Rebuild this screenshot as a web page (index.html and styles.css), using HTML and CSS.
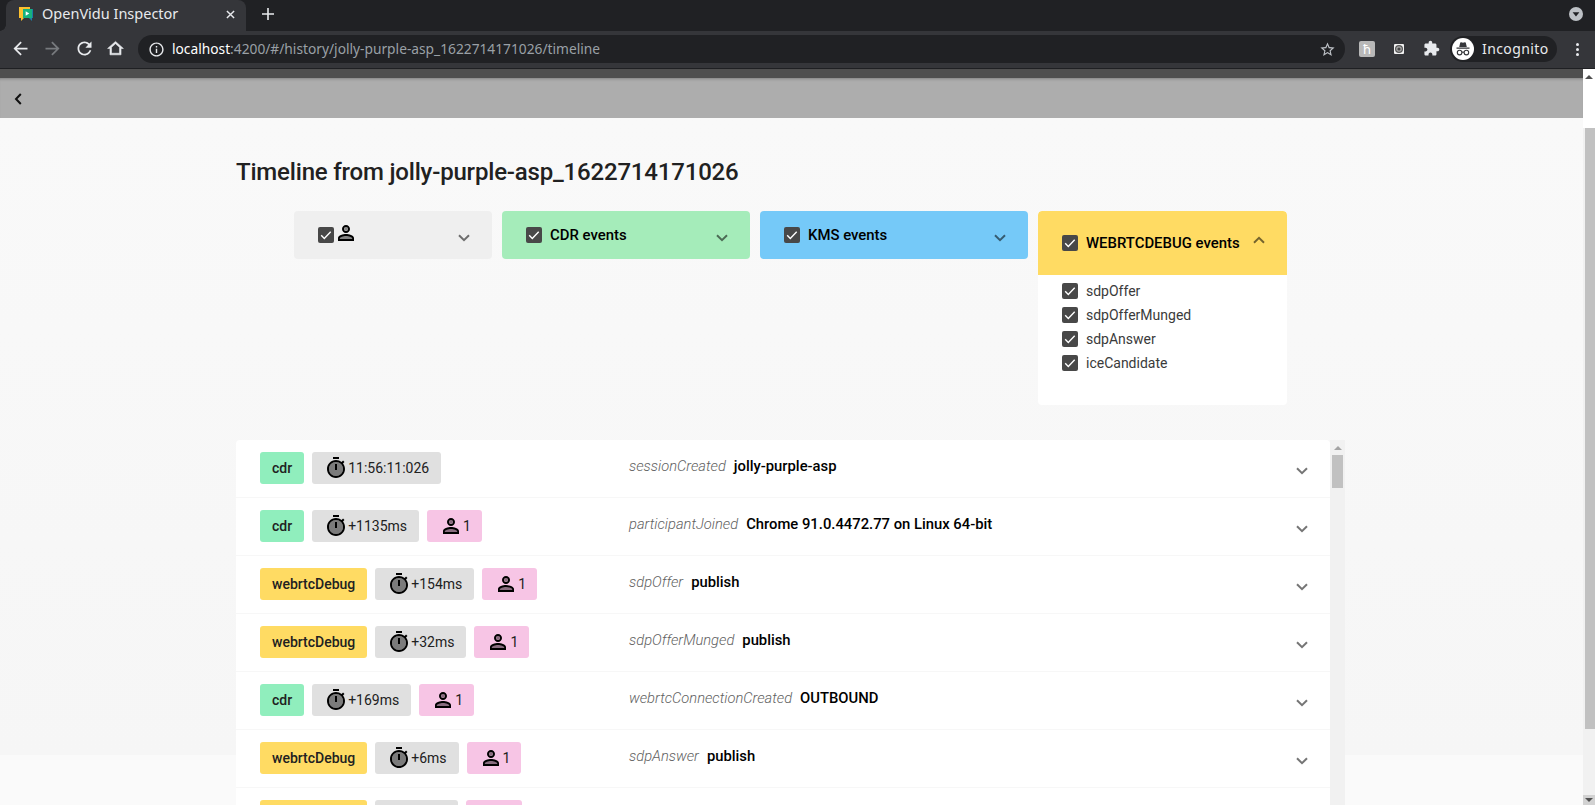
FILE: index.html
```html
<!DOCTYPE html>
<html lang="en">
<head>
    <meta charset="UTF-8">
    <meta name="viewport" content="width=device-width, initial-scale=1.0">
    <title>OpenVidu Inspector</title>
    <link rel="stylesheet" href="styles.css">
</head>
<body>
    <svg class="defs" width="0" height="0">
        <symbol id="i-timer" viewBox="0 0 24 24">
            <path class="soft" d="M12 6c-3.87 0-7 3.13-7 7s3.13 7 7 7 7-3.13 7-7-3.13-7-7-7zm1 8h-2V8h2v6z"/>
            <path d="M9 1h6v2H9zm10.03 6.39l1.42-1.42c-.43-.51-.9-.99-1.41-1.41l-1.42 1.42C16.07 4.74 14.12 4 12 4c-4.97 0-9 4.03-9 9s4.02 9 9 9 9-4.03 9-9c0-2.12-.74-4.07-1.97-5.61zM12 20c-3.87 0-7-3.13-7-7s3.13-7 7-7 7 3.13 7 7-3.13 7-7 7zm-1-6h2V8h-2z"/>
        </symbol>
        <symbol id="i-person" viewBox="0 0 24 24">
            <path class="soft" d="M12 14c-2.7 0-5.8 1.29-6 2.01V18h12v-1.99c-.2-.71-3.3-2.01-6-2.01z"/>
            <circle class="soft" cx="12" cy="8" r="2"/>
            <path d="M12 5.9c1.16 0 2.1.94 2.1 2.1s-.94 2.1-2.1 2.1S9.9 9.16 9.9 8s.94-2.1 2.1-2.1m0 9c2.97 0 6.1 1.46 6.1 2.1v1.1H5.9V17c0-.64 3.13-2.1 6.1-2.1M12 4C9.79 4 8 5.79 8 8s1.79 4 4 4 4-1.79 4-4-1.79-4-4-4zm0 9c-2.67 0-8 1.34-8 4v3h16v-3c0-2.66-5.33-4-8-4z"/>
        </symbol>
        <symbol id="i-check" viewBox="0 0 16 16">
            <rect width="16" height="16" rx="2" fill="#484848"/>
            <path d="M3.2 8.3l3.1 3.1 6.4-6.6" fill="none" stroke="#fff" stroke-width="1.4"/>
        </symbol>
        <symbol id="i-down" viewBox="0 0 12 8">
            <path d="M1 1.2l5 5 5-5" fill="none" stroke="currentColor" stroke-width="2"/>
        </symbol>
    </svg>

    <!-- browser window -->
    <div class="tabstrip">
        <div class="tab">
            <svg class="favicon" viewBox="0 0 16 16">
                <path d="M5 3h10v9h-1v3l-3-3H5z" fill="#1b7fa6"/>
                <path d="M1 1h11v11H6l-3 3v-3H1z" fill="#fcc02e"/>
                <rect x="5" y="3" width="9" height="9" fill="#16b37e"/>
                <path d="M7.7 5.2l3.6 2.3-3.6 2.3z" fill="#fff"/>
            </svg>
            <span class="tab-title">OpenVidu Inspector</span>
            <svg class="tab-close" viewBox="0 0 10 10"><path d="M1 1l8 8M9 1l-8 8" stroke="#e8eaed" stroke-width="1.6"/></svg>
        </div>
        <svg class="new-tab" viewBox="0 0 12 12"><path d="M6 0v12M0 6h12" stroke="#e8eaed" stroke-width="1.6"/></svg>
        <div class="tab-search"><svg viewBox="0 0 14 14"><circle cx="7" cy="7" r="7" fill="#bdc1c6"/><path d="M3.6 5.2h6.8L7 9.4z" fill="#202124"/></svg></div>
    </div>
    <div class="toolbar">
        <div class="tool"><svg viewBox="0 0 24 24"><path fill="#e8eaed" d="M20 11H7.83l5.59-5.59L12 4l-8 8 8 8 1.41-1.41L7.83 13H20v-2z"/></svg></div>
        <div class="tool"><svg viewBox="0 0 24 24"><path fill="#777a7e" d="M4 11h12.17l-5.59-5.59L12 4l8 8-8 8-1.41-1.41L16.17 13H4v-2z"/></svg></div>
        <div class="tool"><svg viewBox="0 0 24 24"><path fill="#e8eaed" d="M17.65 6.35C16.2 4.9 14.21 4 12 4c-4.42 0-7.99 3.58-7.99 8s3.57 8 7.99 8c3.73 0 6.84-2.55 7.73-6h-2.08c-.82 2.33-3.04 4-5.65 4-3.31 0-6-2.69-6-6s2.69-6 6-6c1.66 0 3.14.69 4.22 1.78L13 11h7V4l-2.35 2.35z"/></svg></div>
        <div class="tool"><svg class="home" viewBox="0 0 24 24"><path fill="#e8eaed" stroke="#e8eaed" stroke-width=".7" d="M12 6l5 4.5V18H7v-7.5L12 6M12 3L2 12h3v8h14v-8h3L12 3z"/></svg></div>
        <div class="omnibox">
            <svg class="info" viewBox="0 0 24 24"><path fill="#e8eaed" d="M11 7h2v2h-2zm0 4h2v6h-2zm1-9C6.48 2 2 6.48 2 12s4.48 10 10 10 10-4.48 10-10S17.52 2 12 2zm0 18c-4.41 0-8-3.59-8-8s3.59-8 8-8 8 3.59 8 8-3.59 8-8 8z"/></svg>
            <span class="url"><span class="host">localhost</span>:4200/#/history/jolly-purple-asp_1622714171026/timeline</span>
            <svg class="star" viewBox="0 0 24 24"><path fill="#bdc1c6" d="M22 9.24l-7.19-.62L12 2 9.19 8.63 2 9.24l5.46 4.73L5.82 21 12 17.27 18.18 21l-1.63-7.03L22 9.24zM12 15.4l-3.76 2.27 1-4.28-3.32-2.88 4.38-.38L12 6.1l1.71 4.04 4.38.38-3.32 2.88 1 4.28L12 15.4z"/></svg>
        </div>
        <div class="tool first-ext"><span class="ext-k">ħ</span></div>
        <div class="tool"><svg class="ext-small" viewBox="0 0 10 10"><rect width="10" height="10" rx="1" fill="#f1f1f1"/><circle cx="5" cy="5" r="4" fill="#555"/><circle cx="5" cy="5" r="2.8" fill="#aaa"/><circle cx="5" cy="5" r="1.6" fill="#444"/></svg></div>
        <div class="tool"><svg class="puzzle" viewBox="0 0 24 24"><path fill="#e8eaed" d="M20.5 11H19V7c0-1.1-.9-2-2-2h-4V3.5C13 2.12 11.88 1 10.5 1S8 2.12 8 3.5V5H4c-1.1 0-1.99.9-1.99 2v3.8H3.5c1.49 0 2.7 1.21 2.7 2.7s-1.21 2.7-2.7 2.7H2V20c0 1.1.9 2 2 2h3.8v-1.5c0-1.49 1.21-2.7 2.7-2.7 1.49 0 2.7 1.21 2.7 2.7V22H17c1.1 0 2-.9 2-2v-4h1.5c1.38 0 2.5-1.12 2.5-2.5S21.88 11 20.5 11z"/></svg></div>
        <div class="incognito">
            <svg class="incognito-icon" viewBox="0 0 22 22">
                <circle cx="11" cy="11" r="11" fill="#fff"/>
                <path d="M7.2 9l1-4.2c.1-.4.5-.6.9-.5l1.9.5 1.9-.5c.4-.1.8.1.9.5l1 4.2zM4.5 9.6h13v1.2h-13z" fill="#35363a"/>
                <circle cx="7.6" cy="14.6" r="2.3" fill="none" stroke="#35363a" stroke-width="1.1"/>
                <circle cx="14.4" cy="14.6" r="2.3" fill="none" stroke="#35363a" stroke-width="1.1"/>
                <path d="M9.9 14.2h2.2" stroke="#35363a" stroke-width="1.1"/>
            </svg>
            <span class="incognito-label">Incognito</span>
        </div>
        <div class="tool dots"><i></i><i></i><i></i></div>
    </div>

    <div class="viewport">
        <div class="page">
            <div class="appbar">
                <svg class="back" viewBox="0 0 8 12"><path d="M6.8 1L2 6l4.8 5" fill="none" stroke="#111" stroke-width="2"/></svg>
            </div>

            <div class="content">
                <h1>Timeline from jolly-purple-asp_1622714171026</h1>

                <div class="filters">
                    <div class="panel panel-user">
                        <div class="panel-head">
                            <svg class="check"><use href="#i-check"/></svg>
                            <svg class="user-icon"><use href="#i-person"/></svg>
                            <svg class="chevron"><use href="#i-down"/></svg>
                        </div>
                    </div>
                    <div class="panel panel-cdr">
                        <div class="panel-head">
                            <svg class="check"><use href="#i-check"/></svg>
                            <span class="panel-title">CDR events</span>
                            <svg class="chevron"><use href="#i-down"/></svg>
                        </div>
                    </div>
                    <div class="panel panel-kms">
                        <div class="panel-head">
                            <svg class="check"><use href="#i-check"/></svg>
                            <span class="panel-title">KMS events</span>
                            <svg class="chevron"><use href="#i-down"/></svg>
                        </div>
                    </div>
                    <div class="panel panel-webrtc">
                        <div class="panel-head">
                            <svg class="check"><use href="#i-check"/></svg>
                            <span class="panel-title">WEBRTCDEBUG events</span>
                            <svg class="chevron up"><use href="#i-down"/></svg>
                        </div>
                        <div class="panel-body">
                            <div class="option"><svg class="check"><use href="#i-check"/></svg>sdpOffer</div>
                            <div class="option"><svg class="check"><use href="#i-check"/></svg>sdpOfferMunged</div>
                            <div class="option"><svg class="check"><use href="#i-check"/></svg>sdpAnswer</div>
                            <div class="option"><svg class="check"><use href="#i-check"/></svg>iceCandidate</div>
                        </div>
                    </div>
                </div>

                <div class="timeline">
                    <div class="events">
                        <div class="event">
                            <div class="chips">
                                <span class="chip chip-cdr">cdr</span>
                                <span class="chip chip-time"><svg class="chip-icon"><use href="#i-timer"/></svg>11:56:11:026</span>
                            </div>
                            <span class="ev-name">sessionCreated</span>
                            <span class="ev-value">jolly-purple-asp</span>
                            <svg class="chevron"><use href="#i-down"/></svg>
                        </div>
                        <div class="event">
                            <div class="chips">
                                <span class="chip chip-cdr">cdr</span>
                                <span class="chip chip-time"><svg class="chip-icon"><use href="#i-timer"/></svg>+1135ms</span>
                                <span class="chip chip-user"><svg class="chip-icon"><use href="#i-person"/></svg>1</span>
                            </div>
                            <span class="ev-name">participantJoined</span>
                            <span class="ev-value">Chrome 91.0.4472.77 on Linux 64-bit</span>
                            <svg class="chevron"><use href="#i-down"/></svg>
                        </div>
                        <div class="event">
                            <div class="chips">
                                <span class="chip chip-webrtc">webrtcDebug</span>
                                <span class="chip chip-time"><svg class="chip-icon"><use href="#i-timer"/></svg>+154ms</span>
                                <span class="chip chip-user"><svg class="chip-icon"><use href="#i-person"/></svg>1</span>
                            </div>
                            <span class="ev-name">sdpOffer</span>
                            <span class="ev-value">publish</span>
                            <svg class="chevron"><use href="#i-down"/></svg>
                        </div>
                        <div class="event">
                            <div class="chips">
                                <span class="chip chip-webrtc">webrtcDebug</span>
                                <span class="chip chip-time"><svg class="chip-icon"><use href="#i-timer"/></svg>+32ms</span>
                                <span class="chip chip-user"><svg class="chip-icon"><use href="#i-person"/></svg>1</span>
                            </div>
                            <span class="ev-name">sdpOfferMunged</span>
                            <span class="ev-value">publish</span>
                            <svg class="chevron"><use href="#i-down"/></svg>
                        </div>
                        <div class="event">
                            <div class="chips">
                                <span class="chip chip-cdr">cdr</span>
                                <span class="chip chip-time"><svg class="chip-icon"><use href="#i-timer"/></svg>+169ms</span>
                                <span class="chip chip-user"><svg class="chip-icon"><use href="#i-person"/></svg>1</span>
                            </div>
                            <span class="ev-name">webrtcConnectionCreated</span>
                            <span class="ev-value">OUTBOUND</span>
                            <svg class="chevron"><use href="#i-down"/></svg>
                        </div>
                        <div class="event">
                            <div class="chips">
                                <span class="chip chip-webrtc">webrtcDebug</span>
                                <span class="chip chip-time"><svg class="chip-icon"><use href="#i-timer"/></svg>+6ms</span>
                                <span class="chip chip-user"><svg class="chip-icon"><use href="#i-person"/></svg>1</span>
                            </div>
                            <span class="ev-name">sdpAnswer</span>
                            <span class="ev-value">publish</span>
                            <svg class="chevron"><use href="#i-down"/></svg>
                        </div>
                        <!-- below the fold, only the chip tops show -->
                        <div class="event event-cut">
                            <div class="chips">
                                <span class="chip chip-webrtc"></span>
                                <span class="chip chip-time"></span>
                                <span class="chip chip-user"></span>
                            </div>
                        </div>
                    </div>
                    <div class="list-scroll">
                        <div class="arrow-up"></div>
                        <div class="list-thumb"></div>
                    </div>
                </div>
            </div>
        </div>

        <div class="page-scroll">
            <div class="page-scroll-top"><div class="arrow-up dark"></div></div>
            <div class="page-thumb"></div>
            <div class="page-scroll-rest"></div>
            <div class="page-scroll-btn"><div class="arrow-down"></div></div>
        </div>
    </div>
</body>
</html>
```
FILE: styles.css
```css
* {
    box-sizing: border-box;
}
html, body {
    margin: 0;
    height: 100%;
}
body {
    display: flex;
    flex-direction: column;
    height: 805px;
    overflow: hidden;
    font-family: Roboto, "Liberation Sans", sans-serif;
    font-size: 14px;
    color: #212121;
}
.defs {
    position: absolute;
}

/* browser chrome */
.tabstrip {
    height: 31px;
    flex: none;
    display: flex;
    align-items: center;
    padding: 0 0 3px 6px;
    background: #202124;
}
.tab {
    width: 240px;
    height: 31px;
    margin: 0 0 -3px;
    display: flex;
    align-items: center;
    padding: 0 11px 3px 12px;
    background: #35363a;
    border-radius: 8px 8px 0 0;
    position: relative;
}
.tab::before {
    content: "";
    position: absolute;
    left: -6px;
    bottom: 0;
    width: 6px;
    height: 6px;
    background: radial-gradient(circle at 0 0, #202124 5.5px, #35363a 6px);
}
.favicon {
    width: 16px;
    height: 16px;
}
.tab-title {
    margin: -2px 0 0 8px;
    flex: 1;
    font-family: "Noto Sans", sans-serif;
    font-size: 14.5px;
    color: #e8eaed;
}
.tab-close {
    width: 9px;
    height: 9px;
}
.new-tab {
    width: 12px;
    height: 12px;
    margin-left: 16px;
}
.tab-search {
    margin-left: auto;
    margin-right: 12px;
    display: flex;
}
.tab-search svg {
    width: 14px;
    height: 14px;
}
.toolbar {
    height: 38px;
    flex: none;
    display: flex;
    align-items: center;
    padding: 0 2px 1px 4px;
    background: #35363a;
    border-bottom: 1px solid #1f2023;
}
.tool {
    width: 32px;
    height: 28px;
    flex: none;
    display: flex;
    align-items: center;
    justify-content: center;
}
.tool svg {
    width: 21px;
    height: 21px;
    margin-top: -1px;
}
.tool .home {
    width: 19px;
    height: 19px;
    margin: -1px 2px 0 0;
}
.tool .puzzle {
    width: 17px;
    height: 17px;
}
.tool .ext-small {
    width: 10px;
    height: 10px;
}
.omnibox {
    flex: 1;
    height: 28px;
    margin-left: 6px;
    display: flex;
    align-items: center;
    padding: 0 9px 0 10px;
    background: #202124;
    border-radius: 14px;
}
.info {
    width: 17px;
    height: 17px;
}
.url {
    margin: -2px 0 0 7px;
    flex: 1;
    font-family: "Noto Sans", sans-serif;
    font-size: 13.75px;
    color: #9aa0a6;
}
.host {
    color: #fff;
}
.star {
    width: 17px;
    height: 17px;
}
.first-ext {
    margin-left: 6px;
}
.ext-k {
    width: 16px;
    height: 16px;
    display: flex;
    align-items: center;
    justify-content: center;
    background: #b8b8b8;
    border-radius: 2px;
    font-family: "DejaVu Sans", sans-serif;
    font-size: 13px;
    color: #fff;
}
.incognito {
    width: 107px;
    height: 26px;
    flex: none;
    margin-left: 3px;
    display: flex;
    align-items: center;
    padding-left: 2px;
    background: #202124;
    border-radius: 13px;
    font-family: "Noto Sans", sans-serif;
    font-size: 14px;
    letter-spacing: .4px;
    color: #e8eaed;
}
.incognito-icon {
    width: 22px;
    height: 22px;
    margin-right: 8px;
}
.incognito-label {
    margin-top: -2px;
}
.dots {
    margin-left: 4px;
    flex-direction: column;
    gap: 2px;
}
.dots i {
    width: 3px;
    height: 3px;
    border-radius: 50%;
    background: #e8eaed;
}

/* page */
.viewport {
    flex: 1;
    min-height: 0;
    display: flex;
}
.page {
    flex: 1;
    min-width: 0;
    overflow: hidden;
    background: linear-gradient(#f9f9f9 0, #f6f6f6 637px, #fafafa 637px);
    background-position: 0 49px;
    background-repeat: no-repeat;
}
.appbar {
    height: 49px;
    display: flex;
    align-items: center;
    padding: 2px 0 0 14px;
    background: #adadad;
    border-top: 9px solid #4f4f4f;
    box-shadow: inset 0 3px 3px -2px rgba(0, 0, 0, 0.25);
}
.back {
    width: 8px;
    height: 12px;
}
.content {
    width: 1109px;
    margin-left: 236px;
}
h1 {
    margin: 38px 0 23px;
    font-size: 24px;
    line-height: 32px;
    font-weight: 500;
    letter-spacing: -.185px;
}
.filters {
    display: flex;
    justify-content: center;
    align-items: flex-start;
    gap: 10px;
    margin-bottom: 35px;
}
.panel {
    border-radius: 4px;
    overflow: hidden;
}
.panel-user {
    width: 198px;
    background: #efefef;
}
.panel-cdr {
    width: 248px;
    background: #a5ecba;
}
.panel-kms {
    width: 268px;
    background: #75c9f8;
}
.panel-webrtc {
    width: 249px;
    background: #fff;
}
.panel-head {
    height: 48px;
    display: flex;
    align-items: center;
    padding: 0 24px;
    font-size: 14.9px;
    font-weight: 500;
    color: #000;
}
.panel-webrtc .panel-head {
    height: 64px;
    background: #ffdb63;
    border-radius: 4px 4px 0 0;
}
.panel-title {
    flex: 1;
    margin-left: 8px;
}
.check {
    width: 16px;
    height: 16px;
    flex: none;
}
.user-icon {
    width: 24px;
    height: 24px;
    margin: -4px auto 0 0;
}
.user-icon .soft {
    opacity: .1;
}
.chevron {
    width: 12px;
    height: 8px;
    flex: none;
    margin: 5px -2px 0 0;
    color: rgba(0, 0, 0, 0.54);
}
.chevron.up {
    transform: rotate(180deg);
    margin: -6px -2px 0 0;
}
.panel-body {
    padding: 4px 24px 30px;
}
.option {
    height: 24px;
    display: flex;
    align-items: center;
    gap: 8px;
    color: #3a3a3a;
}

/* timeline list */
.timeline {
    display: flex;
}
.events {
    width: 1094px;
    background: #fff;
    border-radius: 4px 4px 0 0;
}
.event {
    display: flex;
    align-items: center;
    height: 58px;
    padding: 0 24px 1px;
    border-bottom: 1px solid #f7f7f7;
}
.chips {
    width: 369px;
    flex: none;
    display: flex;
    gap: 8px;
}
.chip {
    height: 32px;
    display: flex;
    align-items: center;
    padding: 0 12px;
    border-radius: 3px;
    color: #212121;
}
.chip-cdr {
    background: #90eebd;
    font-weight: 500;
}
.chip-webrtc {
    background: #ffdb63;
    font-weight: 500;
}
.chip-time {
    background: #e0e0e0;
}
.chip-user {
    padding-right: 11px;
    background: #f7c5e5;
}
.chip-icon {
    width: 24px;
    height: 24px;
}
.event-cut .chip-webrtc {
    width: 107px;
}
.event-cut .chip-time {
    width: 83px;
}
.event-cut .chip-user {
    width: 56px;
}
.soft {
    opacity: .45;
}
.ev-name {
    margin: -4px 0 0;
    font-size: 14.7px;
    font-style: italic;
    font-weight: 300;
    color: #616161;
}
.ev-value {
    margin: -5px 0 0 8px;
    font-size: 14.8px;
    font-weight: 500;
    color: #000;
}
.event .chevron {
    margin: 5px -2px 0 auto;
}
.list-scroll {
    width: 15px;
    background: #f1f1f1;
    padding: 6px 2px 0;
}
.arrow-up {
    width: 0;
    height: 0;
    margin: 0 auto 4px;
    border: 4px solid transparent;
    border-top: 0;
    border-bottom: 4px solid #a3a3a3;
}
.arrow-up.dark {
    border-bottom-color: #505050;
}
.arrow-down {
    width: 0;
    height: 0;
    border: 4px solid transparent;
    border-bottom: 0;
    border-top: 4px solid #505050;
}
.list-thumb {
    height: 33px;
    margin-top: 5px;
    background: #c1c1c1;
}

/* page scrollbar */
.page-scroll {
    width: 12px;
    flex: none;
    display: flex;
    flex-direction: column;
    background: #f1f1f1;
}
.page-scroll-top {
    height: 59px;
    padding-top: 6px;
    background: #fff;
}
.page-thumb {
    height: 601px;
    margin-left: 2px;
    background: #c1c1c1;
}
.page-scroll-rest {
    flex: 1;
}
.page-scroll-btn {
    height: 10px;
    display: flex;
    align-items: center;
    justify-content: center;
    background: #d2d2d2;
}
```
